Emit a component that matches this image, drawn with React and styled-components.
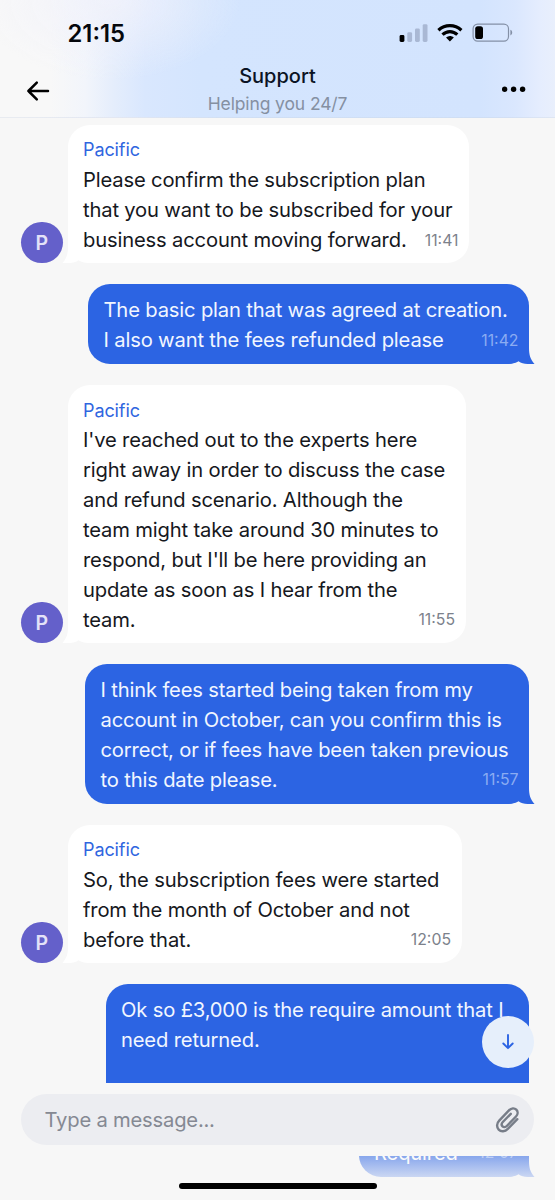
import styled, { createGlobalStyle, css } from "styled-components";

const messages = [
  {
    from: "Pacific",
    width: 401,
    lines: [
      "Please confirm the subscription plan",
      "that you want to be subscribed for your",
      "business account moving forward.",
    ],
    time: "11:41",
  },
  {
    width: 441,
    lines: [
      "The basic plan that was agreed at creation.",
      "I also want the fees refunded please",
    ],
    time: "11:42",
  },
  {
    from: "Pacific",
    width: 397.5,
    lines: [
      "I've reached out to the experts here",
      "right away in order to discuss the case",
      "and refund scenario. Although the",
      "team might take around 30 minutes to",
      "respond, but I'll be here providing an",
      "update as soon as I hear from the",
      "team.",
    ],
    time: "11:55",
  },
  {
    width: 444,
    lines: [
      "I think fees started being taken from my",
      "account in October, can you confirm this is",
      "correct, or if fees have been taken previous",
      "to this date please.",
    ],
    time: "11:57",
  },
  {
    from: "Pacific",
    width: 393.5,
    lines: [
      "So, the subscription fees were started",
      "from the month of October and not",
      "before that.",
    ],
    time: "12:05",
  },
  {
    width: 423.5,
    lines: ["Ok so £3,000 is the require amount that I", "need returned."],
  },
];

function Tail({ mine }) {
  return (
    <TailSvg $mine={mine} viewBox="0 0 28 22" aria-hidden="true">
      <path d="M0 0H22V6C22 13 23.5 17.5 27.5 22H20.5C17 22 14 21 11.5 19.3C8.5 21.4 4 22 0 22Z" />
    </TailSvg>
  );
}

function Message({ from, width, lines, time }) {
  const mine = !from;
  const last = lines[lines.length - 1];

  return (
    <Row $mine={mine}>
      {from && <Avatar>{from[0]}</Avatar>}
      <Bubble $mine={mine} $width={width} $open={!time}>
        {time && <Tail mine={mine} />}
        {from && <Sender>{from}</Sender>}
        {lines.slice(0, -1).map((line) => (
          <Line key={line}>{line}</Line>
        ))}
        <LastLine>
          <Line>{last}</Line>
          {time && <Time $mine={mine}>{time}</Time>}
        </LastLine>
      </Bubble>
    </Row>
  );
}

function StatusIcons() {
  return (
    <StatusSvg width="116" height="22" viewBox="0 0 116 22" aria-hidden="true">
      <rect x="0.6" y="12" width="4.8" height="7" rx="1.4" />
      <g fill="#a9b8d4">
        <rect x="8.3" y="9.2" width="4.8" height="9.8" rx="1.4" />
        <rect x="16" y="5.4" width="4.8" height="13.6" rx="1.4" />
        <rect x="23.7" y="1.2" width="4.8" height="17.8" rx="1.4" />
      </g>
      <g fill="none" stroke="#000" strokeWidth="3.2">
        <path d="M39.4 7.2C46 1.1 55.8 1.1 62.4 7.2" />
        <path d="M43.5 11.6C47.8 7.5 54 7.5 58.3 11.6" />
      </g>
      <path d="M47 14.6C49.4 12.6 52.4 12.6 54.8 14.6L50.9 18.5Z" />
      <rect x="74.1" y="1.1" width="35.4" height="17" rx="4.6" fill="none" stroke="#8490a6" strokeWidth="1.2" />
      <rect x="76.2" y="3.2" width="7.8" height="12.8" rx="2.6" />
      <path d="M111.4 6.8C113.8 7.7 113.8 11.4 111.4 12.4Z" fill="#8490a6" />
    </StatusSvg>
  );
}

export default function App() {
  return (
    <Screen>
      <GlobalStyle />
      <Header>
        <StatusBar>
          <Clock>21:15</Clock>
          <StatusIcons />
        </StatusBar>
        <NavBar>
          <IconButton aria-label="Back">
            <svg width="24" height="22" viewBox="0 0 24 22" fill="none" stroke="#000" strokeWidth="2.5" strokeLinecap="round" strokeLinejoin="round">
              <path d="M22 11H2.4M10.8 2.6L2.4 11L10.8 19.4" />
            </svg>
          </IconButton>
          <Heading>
            <Title>Support</Title>
            <Subtitle>Helping you 24/7</Subtitle>
          </Heading>
          <IconButton aria-label="More">
            <svg width="24" height="22" viewBox="0 0 24 22">
              <circle cx="2.6" cy="9.2" r="2.7" />
              <circle cx="11.6" cy="9.2" r="2.7" />
              <circle cx="20.6" cy="9.2" r="2.7" />
            </svg>
          </IconButton>
        </NavBar>
      </Header>

      <Chat>
        {messages.map((message) => (
          <Message key={message.lines[0]} {...message} />
        ))}
        <ScrollDown aria-label="Scroll to latest">
          <svg width="14" height="18" viewBox="0 0 14 18" fill="none" stroke="#2c64e3" strokeWidth="1.9" strokeLinecap="round" strokeLinejoin="round">
            <path d="M7 2V15M2.3 10.5L7 15.2L11.7 10.5" />
          </svg>
        </ScrollDown>
      </Chat>

      <Composer>
        <Field>
          <Placeholder>Type a message...</Placeholder>
          <svg width="26" height="28" viewBox="0 0 26 28" fill="none" stroke="#777d88" strokeWidth="2.4" strokeLinecap="round" strokeLinejoin="round">
            <path d="M22.3 13.2L12.8 22.9C10 25.8 6 26 3.7 23.6C1.4 21.2 1.6 17.3 4.2 14.6L14.2 4.2C16.3 2 19.4 1.8 21.3 3.6C23.2 5.5 23 8.4 21 10.5L11.8 20C10.5 21.4 8.6 21.4 7.5 20.3C6.4 19.2 6.5 17.4 7.8 16L15.8 7.8" />
          </svg>
        </Field>
      </Composer>

      <Footer>
        <Peek>
          <Tail mine />
          <LastLine>
            <Line>Required</Line>
            <Time $mine>12:07</Time>
          </LastLine>
        </Peek>
        <Fade />
        <HomeIndicator />
      </Footer>
    </Screen>
  );
}

const GlobalStyle = createGlobalStyle`
  * {
    box-sizing: border-box;
  }

  body {
    margin: 0;
    background: #f7f7f7;
  }
`;

const Screen = styled.div`
  width: 555px;
  height: 1200px;
  display: flex;
  flex-direction: column;
  overflow: hidden;
  background: #f7f7f7;
  color: #16181d;
  font-family: Inter, "Liberation Sans", sans-serif;
`;

const Header = styled.header`
  height: 118px;
  flex: none;
  border-bottom: 1px solid rgba(200, 208, 222, 0.3);
  background:
    radial-gradient(ellipse 130px 80px at 110px 0, rgba(241, 242, 251, 0.9), rgba(241, 242, 251, 0)),
    linear-gradient(90deg, #f8f8f8 50px, #f2f5fb 85px, #e4edfc 115px, #d9e7fe 145px, #d4e5fe 200px, #d3e4fe 480px, #dae7fe 515px, #e5edfe 540px, #e9effc 555px);
`;

const StatusBar = styled.div`
  display: flex;
  align-items: flex-start;
  justify-content: space-between;
  height: 60px;
  padding: 18px 40.5px 0 67.5px;
`;

const Clock = styled.div`
  font-size: 23.8px;
  font-weight: 600;
  line-height: 32px;
  color: #05070c;
`;

const StatusSvg = styled.svg`
  margin-top: 5px;
`;

const NavBar = styled.div`
  display: flex;
  justify-content: space-between;
  padding: 0 29px 0 26px;
`;

const IconButton = styled.button`
  width: 24px;
  height: 22px;
  margin-top: 20px;
  padding: 0;
  border: 0;
  background: none;
  cursor: pointer;

  svg {
    display: block;
  }
`;

const Heading = styled.div`
  padding: 2px 0 0 3px;
  text-align: center;
  white-space: nowrap;
`;

const Title = styled.h1`
  margin: 0;
  font-size: 20px;
  font-weight: 500;
  line-height: 28px;
  color: #0b1324;
`;

const Subtitle = styled.p`
  margin: 0;
  font-size: 17.5px;
  line-height: 28px;
  letter-spacing: -0.12px;
  color: #8590a2;
`;

const Chat = styled.main`
  position: relative;
  display: flex;
  flex-direction: column;
  gap: 21.3px;
  height: 965px;
  flex: none;
  padding: 7px 26px 0 21px;
  overflow: hidden;
`;

const Row = styled.div`
  display: flex;
  flex: none;
  align-items: flex-end;
  gap: 5.5px;
  justify-content: ${({ $mine }) => ($mine ? "flex-end" : "flex-start")};
`;

const Avatar = styled.div`
  width: 41.5px;
  height: 41.5px;
  margin-bottom: -0.5px;
  border-radius: 50%;
  display: flex;
  align-items: center;
  justify-content: center;
  background: #6460ca;
  color: #e3e2f8;
  font-size: 19.5px;
  font-weight: 600;
`;

const Bubble = styled.div`
  position: relative;
  width: ${({ $width }) => $width}px;
  padding: ${({ $mine }) => ($mine ? "11px 10.5px 9.2px 15.5px" : "10.2px 10.5px 8.4px 15px")};
  border-radius: 22px;
  background: ${({ $mine }) => ($mine ? "#2c64e3" : "#fff")};
  color: ${({ $mine }) => ($mine ? "#f1f6ff" : "#16181d")};

  /* runs on below the composer */
  ${({ $open }) =>
    $open &&
    css`
      height: 160px;
    `}
`;

// The path is drawn for a right-hand tail and mirrored for the agent.
const TailSvg = styled.svg`
  position: absolute;
  bottom: 0;
  width: 28px;
  height: 22px;
  ${({ $mine }) =>
    $mine
      ? css`
          right: -6px;
          fill: #2c64e3;
        `
      : css`
          left: -6px;
          fill: #fff;
          transform: scaleX(-1);
        `}
`;

const Sender = styled.div`
  font-size: 18px;
  line-height: 29.85px;
  letter-spacing: -0.1px;
  color: #2f66e0;
`;

const Line = styled.div`
  height: 29.85px;
  font-size: 20.2px;
  line-height: 29.85px;
  letter-spacing: -0.165px;
  white-space: nowrap;
`;

const LastLine = styled.div`
  position: relative;
  display: flex;
  justify-content: space-between;
  height: 29.85px;
`;

const Time = styled.time`
  padding-top: 0.8px;
  font-size: 15.8px;
  line-height: 29.85px;
  color: ${({ $mine }) => ($mine ? "#8bacf2" : "#7c818b")};
`;

const ScrollDown = styled.button`
  position: absolute;
  right: 21px;
  bottom: 15px;
  width: 52px;
  height: 52px;
  display: flex;
  align-items: center;
  justify-content: center;
  padding: 0;
  border: 0;
  border-radius: 50%;
  background: #e6effb;
  cursor: pointer;
`;

const Composer = styled.div`
  height: 73px;
  flex: none;
  padding: 11px 21px;
`;

const Field = styled.div`
  display: flex;
  align-items: center;
  justify-content: space-between;
  height: 51px;
  padding: 0 13px 0 23.5px;
  border-radius: 26px;
  background: #ecedf1;
`;

const Placeholder = styled.span`
  font-size: 20.2px;
  letter-spacing: -0.2px;
  color: #858993;
`;

const Footer = styled.footer`
  position: relative;
  display: flex;
  flex: 1;
  justify-content: flex-end;
  align-items: flex-start;
  padding-right: 26px;
  overflow: hidden;
`;

const Peek = styled.div`
  position: relative;
  width: 170px;
  height: 60px;
  margin-top: -39px;
  padding: 20.5px 11.5px 0 15px;
  border-radius: 22px;
  background: #2c64e3;
  color: #fff;
`;

const Fade = styled.div`
  position: absolute;
  inset: 0;
  background: linear-gradient(rgba(247, 247, 247, 0.45), rgba(247, 247, 247, 0.78) 21px);
`;

const HomeIndicator = styled.div`
  position: absolute;
  left: 178.5px;
  bottom: 11px;
  width: 198px;
  height: 6px;
  border-radius: 3px;
  background: #000;
`;
